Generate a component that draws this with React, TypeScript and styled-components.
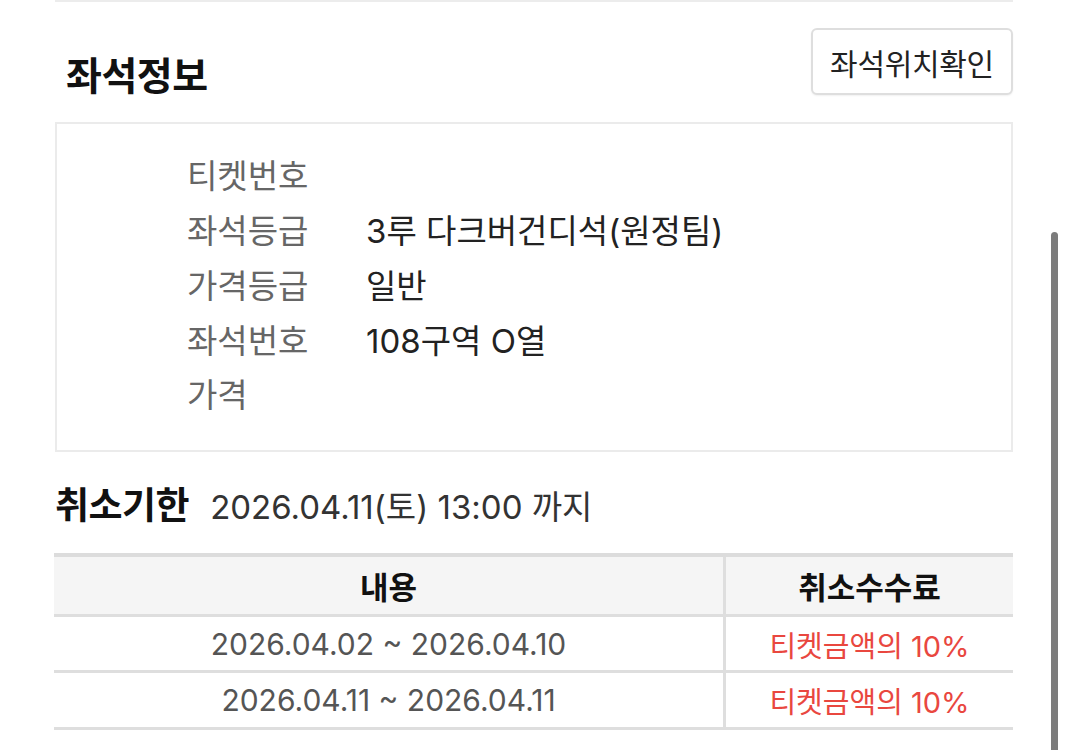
import React from "react";
import styled, { createGlobalStyle } from "styled-components";

const Global = createGlobalStyle`
  html, body { margin: 0; padding: 0; background: #fff; }
  body { font-family: "Noto Sans CJK KR", "Noto Sans", sans-serif; overflow: hidden; }
`;

const MIXED = `Inter, "Noto Sans CJK KR", sans-serif`;

const Page = styled.div`
  width: 1068px;
  height: 750px;
  position: relative;
  overflow: hidden;
  background: #fff;
`;

const Content = styled.div`
  width: 958px;
  margin-left: 55px;
  display: flex;
  flex-direction: column;
`;

const PrevBoxEdge = styled.div`
  height: 2px;
  background: #ececec;
`;

const HeaderRow = styled.div`
  display: flex;
  justify-content: space-between;
  align-items: flex-start;
`;

const Title = styled.h2`
  margin: 50px 0 0 11px;
  font-size: 39px;
  line-height: 42px;
  font-weight: 700;
  color: #111;
  letter-spacing: -0.5px;
`;

const LocateButton = styled.button`
  margin-top: 26px;
  width: 202px;
  height: 67px;
  border: 2px solid #dedede;
  border-radius: 6px;
  background: #fff;
  box-shadow: 0 1px 2px rgba(0, 0, 0, 0.06);
  font-family: inherit;
  font-size: 30px;
  color: #222;
  letter-spacing: -0.3px;
  padding: 0;
`;

const InfoBox = styled.div`
  margin-top: 27px;
  border: 2px solid #ebebeb;
  height: 330px;
  box-sizing: border-box;
  padding: 22px 0 0 130px;
  display: flex;
  flex-direction: column;
`;

const InfoRow = styled.div<{ $h: number }>`
  display: grid;
  grid-template-columns: 179px 1fr;
  height: ${(p) => p.$h}px;
  align-items: center;
`;

const Label = styled.span`
  font-size: 33px;
  color: #666;
`;

const Value = styled.span`
  font-family: ${MIXED};
  font-size: 33px;
  color: #222;
`;

const DeadlineRow = styled.div`
  margin-top: 30px;
  height: 44px;
  display: flex;
  align-items: baseline;
  gap: 21px;
`;

const DeadlineTitle = styled.span`
  font-size: 37px;
  line-height: 42px;
  font-weight: 700;
  color: #111;
  letter-spacing: -0.5px;
`;

const DeadlineDate = styled.span`
  font-family: ${MIXED};
  font-size: 33px;
  line-height: 42px;
  color: #333;
`;

const Table = styled.div`
  margin-top: 27px;
  display: grid;
  grid-template-columns: 669px 1fr;
  column-gap: 3px;
  background: #dedede;
  border-top: 4px solid #dcdcdc;
  width: 959px;
  margin-left: -1px;
`;

const Cell = styled.div<{ $head?: boolean; $red?: boolean; $h: number }>`
  height: ${(p) => p.$h}px;
  display: flex;
  align-items: center;
  justify-content: center;
  background: ${(p) => (p.$head ? "#f5f5f5" : "#fff")};
  font-family: ${MIXED};
  font-size: ${(p) => (p.$head ? 31 : p.$red ? 29 : 30)}px;
  font-weight: ${(p) => (p.$head ? 700 : 400)};
  color: ${(p) => (p.$head ? "#111" : p.$red ? "#e9473f" : "#555")};
  margin-bottom: 3px;
`;

const Scrollbar = styled.div`
  position: absolute;
  left: 1051px;
  top: 232px;
  width: 7px;
  height: 540px;
  border-radius: 4px;
  background: #7c7c7c;
`;

const rows: [string, string, number][] = [
  ["티켓번호", "", 55],
  ["좌석등급", "3루 다크버건디석(원정팀)", 55],
  ["가격등급", "일반", 55],
  ["좌석번호", "108구역 O열", 55],
  ["가격", "", 53],
];

export default function App() {
  return (
    <Page>
      <Global />
      <Content>
        <PrevBoxEdge />
        <HeaderRow>
          <Title>좌석정보</Title>
          <LocateButton>좌석위치확인</LocateButton>
        </HeaderRow>
        <InfoBox>
          {rows.map(([l, v, h]) => (
            <InfoRow key={l} $h={h}>
              <Label>{l}</Label>
              <Value>{v}</Value>
            </InfoRow>
          ))}
        </InfoBox>
        <DeadlineRow>
          <DeadlineTitle>취소기한</DeadlineTitle>
          <DeadlineDate>2026.04.11(토) 13:00 까지</DeadlineDate>
        </DeadlineRow>
        <Table>
          <Cell $head $h={57}>내용</Cell>
          <Cell $head $h={57}>취소수수료</Cell>
          <Cell $h={53}>2026.04.02 ~ 2026.04.10</Cell>
          <Cell $red $h={53}>티켓금액의 10%</Cell>
          <Cell $h={54}>2026.04.11 ~ 2026.04.11</Cell>
          <Cell $red $h={54}>티켓금액의 10%</Cell>
        </Table>
      </Content>
      <Scrollbar />
    </Page>
  );
}
